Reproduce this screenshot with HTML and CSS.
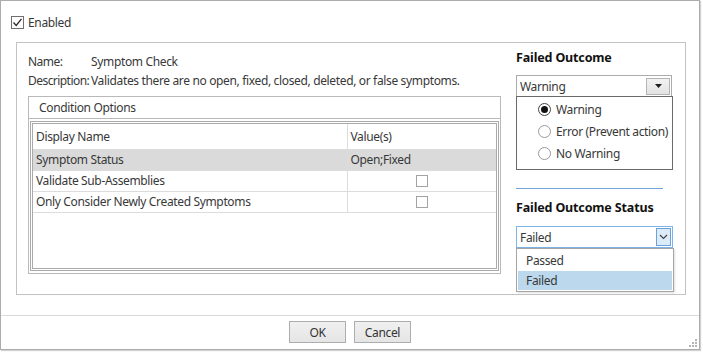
FILE: index.html
```html
<!DOCTYPE html>
<html lang="en">
<head>
    <meta charset="UTF-8">
    <meta name="viewport" content="width=device-width, initial-scale=1.0">
    <title>Condition Options</title>
    <link rel="stylesheet" href="styles.css">
</head>
<body>
    <div class="window">
        <div class="content">
            <label class="check-row">
                <span class="box checked">
                    <svg width="11" height="11" viewBox="0 0 11 11"><path d="M1.5 5.5 L4.2 8.5 L9.5 1.8" fill="none" stroke="#2b2b2b" stroke-width="1.3"/></svg>
                </span>
                Enabled
            </label>

            <div class="group">
                <div class="left">
                    <div class="field"><span class="field-label">Name:</span><span>Symptom Check</span></div>
                    <div class="field"><span class="field-label">Description:</span><span>Validates there are no open, fixed, closed, deleted, or false symptoms.</span></div>

                    <div class="options">
                        <div class="options-head">Condition Options</div>
                        <div class="grid">
                            <table>
                                <tr class="head">
                                    <td class="name-col">Display Name</td>
                                    <td>Value(s)</td>
                                </tr>
                                <tr class="selected">
                                    <td class="name-col">Symptom Status</td>
                                    <td>Open;Fixed</td>
                                </tr>
                                <tr>
                                    <td class="name-col">Validate Sub-Assemblies</td>
                                    <td class="center"><span class="box small"></span></td>
                                </tr>
                                <tr>
                                    <td class="name-col">Only Consider Newly Created Symptoms</td>
                                    <td class="center"><span class="box small"></span></td>
                                </tr>
                            </table>
                        </div>
                    </div>
                </div>

                <div class="right">
                    <h3 class="title">Failed Outcome</h3>
                    <div class="combo">
                        <span>Warning</span>
                        <span class="combo-btn">
                            <svg width="7" height="4" viewBox="0 0 7 4"><path d="M0 0 H7 L3.5 4 Z" fill="#1e1e1e"/></svg>
                        </span>
                    </div>
                    <div class="radio-list">
                        <div class="radio-row"><span class="radio on"></span>Warning</div>
                        <div class="radio-row"><span class="radio"></span>Error (Prevent action)</div>
                        <div class="radio-row"><span class="radio"></span>No Warning</div>
                    </div>

                    <div class="sep"></div>

                    <h3 class="title second">Failed Outcome Status</h3>
                    <div class="combo open">
                        <span>Failed</span>
                        <span class="combo-btn blue">
                            <svg width="9" height="6" viewBox="0 0 9 6"><path d="M1 1 L4.5 4.5 L8 1" fill="none" stroke="#444" stroke-width="1.2"/></svg>
                        </span>
                    </div>
                    <ul class="list">
                        <li>Passed</li>
                        <li class="picked">Failed</li>
                    </ul>
                </div>
            </div>
        </div>

        <div class="footer">
            <button class="btn">OK</button>
            <button class="btn">Cancel</button>
            <svg class="grip" width="8" height="8" viewBox="0 0 8 8">
                <rect x="6" y="0" width="2" height="2" fill="#b5b5b5"/>
                <rect x="3" y="3" width="2" height="2" fill="#b5b5b5"/>
                <rect x="6" y="3" width="2" height="2" fill="#b5b5b5"/>
                <rect x="0" y="6" width="2" height="2" fill="#b5b5b5"/>
                <rect x="3" y="6" width="2" height="2" fill="#b5b5b5"/>
                <rect x="6" y="6" width="2" height="2" fill="#b5b5b5"/>
            </svg>
        </div>
    </div>
</body>
</html>
```

FILE: styles.css
```css
* {
    box-sizing: border-box;
}

body {
    margin: 0;
    width: 703px;
    height: 353px;
    background: #fff;
    font-family: "Noto Sans", "Open Sans", sans-serif;
    font-size: 12px;
    letter-spacing: -0.35px;
    color: #383838;
    overflow: hidden;
}

.window {
    position: relative;
    width: 700px;
    height: 350px;
    border: 1px solid #acacac;
    box-shadow: 1px 1px 1px rgba(0, 0, 0, 0.18);
    background: #fff;
}

.content {
    padding: 15px 0 0 10px;
}

/* checkboxes */
.check-row {
    display: flex;
    align-items: center;
    height: 13px;
    gap: 4px;
}

.box {
    display: inline-flex;
    align-items: center;
    justify-content: center;
    width: 13px;
    height: 13px;
    border: 1px solid #8a8a8a;
    background: #fff;
}

.box.checked {
    border-color: #6f6f6f;
}

.box.small {
    width: 12px;
    height: 12px;
    border-color: #a3a3a3;
}

/* main group */
.group {
    display: flex;
    gap: 15px;
    width: 670px;
    height: 253px;
    margin: 13px 0 0 5px;
    padding: 9px 12px 0 11px;
    border: 1px solid #c3c3c3;
}

.left {
    width: 473px;
}

.field {
    display: flex;
    height: 19px;
    align-items: center;
    white-space: nowrap;
}

.field-label {
    flex: none;
    width: 63px;
    letter-spacing: -0.55px;
}

.options {
    margin-top: 6px;
    height: 178px;
    border: 1px solid #b9b9b9;
}

.options-head {
    height: 22px;
    line-height: 21px;
    padding-left: 10px;
    border-bottom: 1px solid #b9b9b9;
}

.grid {
    height: 150px;
    margin: 2px 1px 2px 1px;
    border: 3px double #aaaaaa;
}

table {
    width: 100%;
    border-collapse: collapse;
}

td {
    height: 21px;
    padding: 0 0 0 3px;
    border-bottom: 1px solid #dcdcdc;
    white-space: nowrap;
}

tr.head td {
    height: 25px;
    padding-top: 1px;
}

td.name-col {
    width: 314px;
    border-right: 1px solid #dcdcdc;
}

td.center {
    text-align: center;
    padding: 0;
}

td.center .box {
    vertical-align: middle;
    margin-top: -2px;
}

tr.selected td {
    background: #dadada;
}

/* right side */
.right {
    width: 157px;
}

.title {
    margin: -4px 0 0;
    height: 20px;
    line-height: 20px;
    font-size: 12.5px;
    font-weight: bold;
    letter-spacing: -0.15px;
    color: #111;
}

.title.second {
    margin-top: 9px;
}

.combo {
    display: flex;
    align-items: center;
    justify-content: space-between;
    width: 156px;
    height: 22px;
    margin-top: 7px;
    padding: 0 1px 0 3px;
    border: 1px solid #acacac;
}

.combo-btn {
    display: flex;
    align-items: center;
    justify-content: center;
    width: 24px;
    height: 17px;
    border: 1px solid #b4b4b4;
    background: linear-gradient(#f2f2f2, #e3e3e3);
}

.combo.open {
    border-color: #7eb4ea;
    width: 157px;
    margin-top: 8px;
}

.combo-btn.blue {
    width: 15px;
    height: 18px;
    border-color: #6aa3dc;
    background: #dcebf9;
}

.radio-list {
    width: 157px;
    height: 74px;
    margin-top: -1px;
    padding-top: 1px;
    border: 1px solid #6a6a6a;
}

.radio-row {
    display: flex;
    align-items: center;
    height: 22px;
    padding-left: 21px;
    gap: 5px;
}

.radio {
    width: 13px;
    height: 13px;
    border: 1px solid #9a9a9a;
    border-radius: 50%;
    display: flex;
    align-items: center;
    justify-content: center;
}

.radio.on {
    border-color: #444;
}

.radio.on::after {
    content: "";
    width: 7px;
    height: 7px;
    border-radius: 50%;
    background: #111;
}

.sep {
    width: 147px;
    margin-top: 18px;
    border-top: 1px solid #6fa6de;
}

.list {
    list-style: none;
    margin: 0;
    width: 158px;
    height: 44px;
    padding: 2px 1px 1px;
    border: 1px solid #a5a5a5;
    box-shadow: 1px 1px 2px rgba(0, 0, 0, 0.12);
}

.list li {
    height: 20px;
    line-height: 19px;
    padding-left: 8px;
}

.list li.picked {
    height: 19px;
    line-height: 19px;
    background: #bcd8ec;
}

/* footer */
.footer {
    display: flex;
    justify-content: center;
    gap: 8px;
    margin-top: 20px;
    height: 34px;
    padding-top: 5px;
    border-top: 1px solid #dadada;
}

.btn {
    width: 57px;
    height: 22px;
    border: 1px solid #adadad;
    background: linear-gradient(#f0f0f0, #e5e5e5);
    font-family: inherit;
    font-size: 12px;
    letter-spacing: -0.35px;
    color: #333;
    padding: 0;
}

.grip {
    position: absolute;
    right: 2px;
    bottom: 2px;
}
```
